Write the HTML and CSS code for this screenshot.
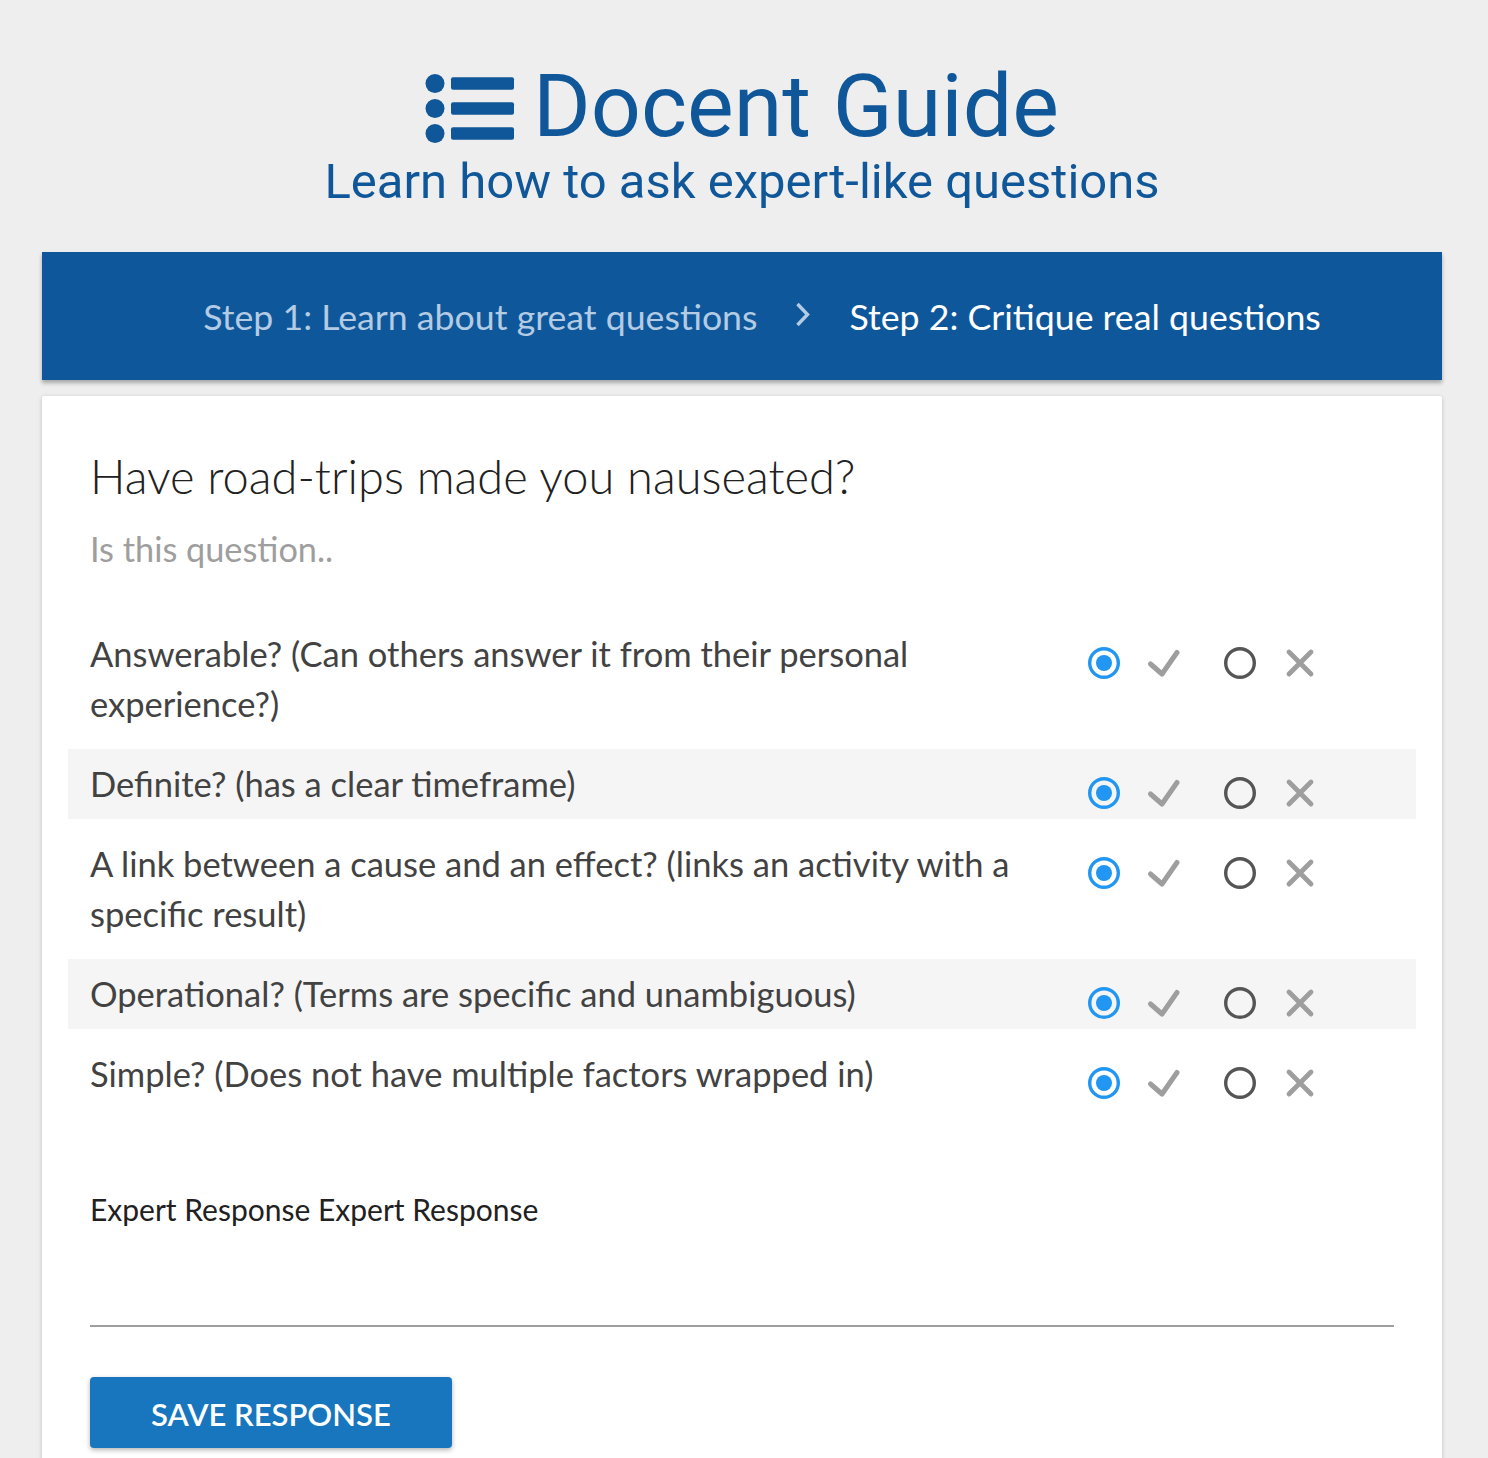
FILE: index.html
```html
<!DOCTYPE html>
<html lang="en">
<head>
<meta charset="utf-8">
<title>Docent Guide</title>
<link rel="stylesheet" href="styles.css">
</head>
<body>
<header class="brand">
  <h1 class="brand-title">
    <svg class="brand-icon" width="90" height="72" viewBox="0 0 90 72" aria-hidden="true">
      <circle cx="10" cy="11.5" r="9.5" fill="#0f5799"/>
      <circle cx="10" cy="36.5" r="9.5" fill="#0f5799"/>
      <circle cx="10" cy="61.5" r="9.5" fill="#0f5799"/>
      <rect x="26" y="5.3" width="63" height="12.5" rx="2" fill="#0f5799"/>
      <rect x="26" y="30.3" width="63" height="12.5" rx="2" fill="#0f5799"/>
      <rect x="26" y="55.3" width="63" height="12.5" rx="2" fill="#0f5799"/>
    </svg>
    <span>Docent Guide</span>
  </h1>
  <p class="brand-sub">Learn how to ask expert-like questions</p>
</header>

<nav class="steps">
  <span class="step step-done">Step 1: Learn about great questions</span>
  <svg class="chev" width="16" height="26" viewBox="0 0 16 26" aria-hidden="true">
    <polyline points="2.5,2 12.5,12.5 2.5,23" fill="none" stroke="#b3cbe3" stroke-width="3.4" stroke-linecap="butt" stroke-linejoin="miter"/>
  </svg>
  <span class="step step-active">Step 2: Critique real questions</span>
</nav>

<main class="card">
  <h2 class="question">Have road-trips made you nauseated?</h2>
  <p class="prompt">Is this question..</p>

  <div class="criteria">
    <div class="crit">
      <div class="crit-text">Answerable? (Can others answer it from their personal experience?)</div>
      <div class="choices">
        <div class="pair">
          <svg class="ic" viewBox="4 4 32 32"><circle cx="20" cy="20" r="14.3" fill="none" stroke="#2196f3" stroke-width="3.4"/><circle cx="20" cy="20" r="8" fill="#2196f3"/></svg>
          <svg class="ic" viewBox="4 4 32 32"><polyline points="6.5,21 18,31 33,9.5" fill="none" stroke="#9e9e9e" stroke-width="5" stroke-linecap="round" stroke-linejoin="round"/></svg>
        </div>
        <div class="pair">
          <svg class="ic" viewBox="4 4 32 32"><circle cx="20" cy="20" r="14.3" fill="none" stroke="#555555" stroke-width="3.4"/></svg>
          <svg class="ic" viewBox="4 4 32 32"><path d="M9 9 L31 31 M31 9 L9 31" fill="none" stroke="#9e9e9e" stroke-width="4.8" stroke-linecap="round"/></svg>
        </div>
      </div>
    </div>
    <div class="crit">
      <div class="crit-text">Definite? (has a clear timeframe)</div>
      <div class="choices">
        <div class="pair">
          <svg class="ic" viewBox="4 4 32 32"><circle cx="20" cy="20" r="14.3" fill="none" stroke="#2196f3" stroke-width="3.4"/><circle cx="20" cy="20" r="8" fill="#2196f3"/></svg>
          <svg class="ic" viewBox="4 4 32 32"><polyline points="6.5,21 18,31 33,9.5" fill="none" stroke="#9e9e9e" stroke-width="5" stroke-linecap="round" stroke-linejoin="round"/></svg>
        </div>
        <div class="pair">
          <svg class="ic" viewBox="4 4 32 32"><circle cx="20" cy="20" r="14.3" fill="none" stroke="#555555" stroke-width="3.4"/></svg>
          <svg class="ic" viewBox="4 4 32 32"><path d="M9 9 L31 31 M31 9 L9 31" fill="none" stroke="#9e9e9e" stroke-width="4.8" stroke-linecap="round"/></svg>
        </div>
      </div>
    </div>
    <div class="crit">
      <div class="crit-text">A link between a cause and an effect? (links an activity with a specific result)</div>
      <div class="choices">
        <div class="pair">
          <svg class="ic" viewBox="4 4 32 32"><circle cx="20" cy="20" r="14.3" fill="none" stroke="#2196f3" stroke-width="3.4"/><circle cx="20" cy="20" r="8" fill="#2196f3"/></svg>
          <svg class="ic" viewBox="4 4 32 32"><polyline points="6.5,21 18,31 33,9.5" fill="none" stroke="#9e9e9e" stroke-width="5" stroke-linecap="round" stroke-linejoin="round"/></svg>
        </div>
        <div class="pair">
          <svg class="ic" viewBox="4 4 32 32"><circle cx="20" cy="20" r="14.3" fill="none" stroke="#555555" stroke-width="3.4"/></svg>
          <svg class="ic" viewBox="4 4 32 32"><path d="M9 9 L31 31 M31 9 L9 31" fill="none" stroke="#9e9e9e" stroke-width="4.8" stroke-linecap="round"/></svg>
        </div>
      </div>
    </div>
    <div class="crit">
      <div class="crit-text">Operational? (Terms are specific and unambiguous)</div>
      <div class="choices">
        <div class="pair">
          <svg class="ic" viewBox="4 4 32 32"><circle cx="20" cy="20" r="14.3" fill="none" stroke="#2196f3" stroke-width="3.4"/><circle cx="20" cy="20" r="8" fill="#2196f3"/></svg>
          <svg class="ic" viewBox="4 4 32 32"><polyline points="6.5,21 18,31 33,9.5" fill="none" stroke="#9e9e9e" stroke-width="5" stroke-linecap="round" stroke-linejoin="round"/></svg>
        </div>
        <div class="pair">
          <svg class="ic" viewBox="4 4 32 32"><circle cx="20" cy="20" r="14.3" fill="none" stroke="#555555" stroke-width="3.4"/></svg>
          <svg class="ic" viewBox="4 4 32 32"><path d="M9 9 L31 31 M31 9 L9 31" fill="none" stroke="#9e9e9e" stroke-width="4.8" stroke-linecap="round"/></svg>
        </div>
      </div>
    </div>
    <div class="crit">
      <div class="crit-text">Simple? (Does not have multiple factors wrapped in)</div>
      <div class="choices">
        <div class="pair">
          <svg class="ic" viewBox="4 4 32 32"><circle cx="20" cy="20" r="14.3" fill="none" stroke="#2196f3" stroke-width="3.4"/><circle cx="20" cy="20" r="8" fill="#2196f3"/></svg>
          <svg class="ic" viewBox="4 4 32 32"><polyline points="6.5,21 18,31 33,9.5" fill="none" stroke="#9e9e9e" stroke-width="5" stroke-linecap="round" stroke-linejoin="round"/></svg>
        </div>
        <div class="pair">
          <svg class="ic" viewBox="4 4 32 32"><circle cx="20" cy="20" r="14.3" fill="none" stroke="#555555" stroke-width="3.4"/></svg>
          <svg class="ic" viewBox="4 4 32 32"><path d="M9 9 L31 31 M31 9 L9 31" fill="none" stroke="#9e9e9e" stroke-width="4.8" stroke-linecap="round"/></svg>
        </div>
      </div>
    </div>
  </div>

  <div class="response">
    <div class="response-label">Expert Response Expert Response</div>
    <div class="response-field"></div>
  </div>

  <button class="save" type="button">SAVE RESPONSE</button>
</main>
</body>
</html>
```

FILE: styles.css
```css
* { box-sizing: border-box; }

html, body {
  margin: 0;
  padding: 0;
  background: #eeeeee;
}

body {
  font-family: "Lato", "Liberation Sans", sans-serif;
  color: #424242;
  padding: 0 46px 40px 42px;
}

.brand {
  display: flex;
  flex-direction: column;
  align-items: center;
  padding-top: 62px;
  color: #0f5799;
  font-family: "Roboto", "Liberation Sans", sans-serif;
}

.brand-title {
  margin: 0;
  display: flex;
  align-items: center;
  gap: 18px;
  font-weight: 400;
  font-size: 88px;
  line-height: 88px;
  height: 88px;
}

.brand-icon {
  display: block;
  margin-top: 4px;
}

.brand-sub {
  margin: 7px 0 0 0;
  font-size: 49px;
  line-height: 49px;
  font-weight: 400;
}

.steps {
  margin-top: 46px;
  height: 128px;
  background: #0f579b;
  box-shadow: 0 3px 4px rgba(0, 0, 0, 0.3);
  display: flex;
  align-items: center;
  justify-content: center;
  gap: 38px;
  padding-left: 40px;
  font-size: 35.7px;
}

.step-done { color: #b3cbe3; }
.step-active { color: #ffffff; }

.chev { display: block; margin-top: -2px; }

.card {
  margin-top: 16px;
  background: #ffffff;
  box-shadow: 0 1px 4px rgba(0, 0, 0, 0.2);
  border-radius: 2px;
  padding: 52px 26px 60px 26px;
}

.question {
  margin: 0 22px;
  font-weight: 300;
  font-size: 47px;
  line-height: 1.2;
  color: #212121;
}

.prompt {
  margin: 24px 22px 0 22px;
  font-size: 34.3px;
  line-height: 1.2;
  color: #9e9e9e;
}

.criteria {
  margin-top: 49px;
  display: flex;
  flex-direction: column;
  gap: 10px;
}

.crit {
  display: grid;
  grid-template-columns: 1fr auto;
  padding: 10px 22px;
}

.crit:nth-child(even) { background: #f5f5f5; }

.crit-text {
  font-size: 34.5px;
  line-height: 50px;
  color: #424242;
  padding-right: 30px;
}

.choices {
  display: flex;
  gap: 44px;
  margin-top: 18px;
  padding-right: 78px;
}

.pair {
  display: flex;
  gap: 28px;
}

.ic {
  display: block;
  width: 32px;
  height: 32px;
  overflow: visible;
}

.response {
  margin: 82px 22px 0 22px;
}

.response-label {
  font-size: 30px;
  line-height: 36px;
  color: #212121;
}

.response-field {
  height: 100px;
  border-bottom: 2px solid #9e9e9e;
}

.save {
  margin: 50px 22px 0 22px;
  display: block;
  width: 362px;
  height: 71px;
  padding-top: 4px;
  border: none;
  border-radius: 4px;
  background: #1776bd;
  color: #ffffff;
  font-family: "Lato", "Liberation Sans", sans-serif;
  font-size: 31px;
  font-weight: 600;
  box-shadow: 0 2px 5px rgba(0, 0, 0, 0.3);
}
```
